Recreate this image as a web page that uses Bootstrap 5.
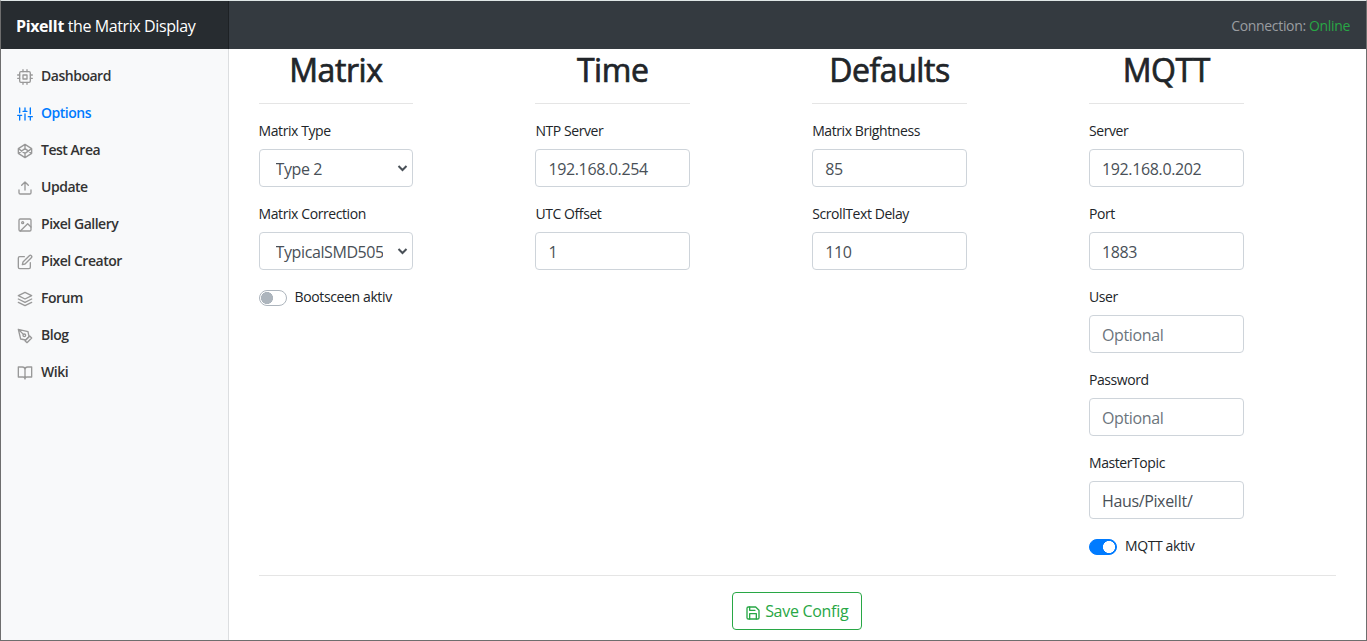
<!DOCTYPE html>
<html lang="en">
<head>
<meta charset="utf-8">
<meta name="viewport" content="width=device-width, initial-scale=1">
<title>PixelIt the Matrix Display</title>
<link href="https://cdn.jsdelivr.net/npm/bootstrap@5.3.0/dist/css/bootstrap.min.css" rel="stylesheet">
<style>
  body { font-family: "Open Sans", "Noto Sans", sans-serif; color: #212529; background: #fff; height: 100vh; overflow: hidden; }
  .app-frame { height: 100vh; border: 1px solid #6e6e6e; border-top-color: #dfe6e6; }
  .app-header { height: 48px; background: #343a40; }
  .app-brand { width: 228px; padding-left: 15px; padding-top: 1px; background: #272c30; box-shadow: inset -1px 0 0 rgba(0,0,0,.25); color: #fff; font-size: 16px; letter-spacing: -.4px; }
  .app-status { font-size: 14px; letter-spacing: -.34px; color: #9a9da0; padding-right: 16px; padding-top: 1px; }
  .app-status span { color: #28a745; }
  .app-side { width: 228px; background: #f8f9fa; border-right: 1px solid #dcdee0; padding-top: 8.5px; }
  .app-side .nav-link { height: 37px; padding: 0 16px; color: #333; font-size: 14px; font-weight: 600; letter-spacing: -.48px; gap: 8px; }
  .app-side .nav-link span { margin-top: -2px; }
  .app-side .nav-link svg { width: 16px; height: 16px; color: #999; margin-top: 2px; }
  .app-side .nav-link.active, .app-side .nav-link.active svg { color: #007bff; }
  .icon { fill: none; stroke: currentColor; stroke-width: 2; stroke-linecap: round; stroke-linejoin: round; flex: none; }
  .app-main { padding: 0 30.2px 0 29.6px; }
  .app-main .row { --bs-gutter-x: 30px; }
  h2 { font-size: 32px; font-weight: 400; -webkit-text-stroke: .7px #212529; line-height: 38.4px; margin: 0; padding-top: 2px; height: 38px; letter-spacing: -.45px; }
  hr { margin: 16px 0; border-top: 1px solid rgba(0,0,0,.1); opacity: 1; }
  .form-label { display: block; font-size: 14px; line-height: 21px; margin-bottom: 8px; padding: 0; letter-spacing: -.42px; }
  .field { margin-bottom: 16px; }
  .form-control, .form-select { height: 38px; font-size: 16px; padding: 8px 12px 6px; color: #495057; border-color: #ced4da; border-radius: 4px; letter-spacing: -.4px; }
  .form-control { letter-spacing: -.36px; }
  .form-control::placeholder { color: #6c757d; }
  .form-select { padding: 7px 29px 6px 16px; text-overflow: clip; background-size: 11px 12px; background-position: right 4px center;
    background-image: url("data:image/svg+xml,%3csvg xmlns='http://www.w3.org/2000/svg' viewBox='0 0 11 12'%3e%3cpath fill='none' stroke='%23495057' stroke-width='2' d='M1.5 4l4 4 4-4'/%3e%3c/svg%3e"); }
  .form-switch { min-height: 24px; height: 24px; padding-left: 36px; margin-bottom: 16px; }
  .form-switch .form-check-input { width: 28px; height: 16px; margin: 4px 0 0 -36px; border-color: #adb5bd; background-size: auto; background-position: 1px center; background-repeat: no-repeat;
    background-image: radial-gradient(circle at 6px 7px, #adb5bd 5.7px, transparent 6.3px); }
  .form-switch .form-check-input:checked { background-color: #007bff; border-color: #007bff; background-position: 13px center; background-image: radial-gradient(circle at 6px 7px, #fff 5.7px, transparent 6.3px); }
  .form-switch .form-check-label { display: block; font-size: 14px; line-height: 21px; letter-spacing: -.38px; }
  .btn-save { --bs-btn-color: #28a745; --bs-btn-border-color: #28a745; width: 130px; height: 38px; border-radius: 4px; padding: 0 1px 0 0; letter-spacing: -.3px; }
  .btn-save .icon { margin-top: 3px; }
</style>
</head>
<body>
<div class="app-frame d-flex flex-column">
  <header class="app-header d-flex justify-content-between flex-shrink-0">
    <div class="app-brand d-flex align-items-center"><div><strong>PixelIt</strong> the Matrix Display</div></div>
    <div class="app-status d-flex align-items-center"><div>Connection: <span>Online</span></div></div>
  </header>
  <div class="d-flex flex-grow-1">
    <nav class="app-side flex-shrink-0">
      <ul class="nav flex-column">
        <li><a class="nav-link d-flex align-items-center" href="#"><svg class="icon" viewBox="0 0 24 24"><rect x="4" y="4" width="16" height="16" rx="2"/><rect x="9" y="9" width="6" height="6"/><path d="M9 1v3M15 1v3M9 20v3M15 20v3M20 9h3M20 14h3M1 9h3M1 14h3"/></svg><span>Dashboard</span></a></li>
        <li><a class="nav-link active d-flex align-items-center" href="#"><svg class="icon" viewBox="0 0 24 24"><path d="M4 21v-7M4 10V3M12 21v-9M12 8V3M20 21v-5M20 12V3M1 14h6M9 8h6M17 16h6"/></svg><span>Options</span></a></li>
        <li><a class="nav-link d-flex align-items-center" href="#"><svg class="icon" viewBox="0 0 24 24"><path d="M12 2l10 6.500v7L12 22 2 15.500v-7L12 2zM12 22v-6.500M22 8.500l-10 7-10-7M2 15.500l10-7 10 7M12 2v6.500"/></svg><span>Test Area</span></a></li>
        <li><a class="nav-link d-flex align-items-center" href="#"><svg class="icon" viewBox="0 0 24 24"><path d="M21 15v4a2 2 0 0 1-2 2H5a2 2 0 0 1-2-2v-4M17 8l-5-5-5 5M12 3v12"/></svg><span>Update</span></a></li>
        <li><a class="nav-link d-flex align-items-center" href="#"><svg class="icon" viewBox="0 0 24 24"><rect x="3" y="3" width="18" height="18" rx="2"/><circle cx="8.500" cy="8.500" r="1.500"/><path d="M21 15l-5-5L5 21"/></svg><span>Pixel Gallery</span></a></li>
        <li><a class="nav-link d-flex align-items-center" href="#"><svg class="icon" viewBox="0 0 24 24"><path d="M11 4H4a2 2 0 0 0-2 2v14a2 2 0 0 0 2 2h14a2 2 0 0 0 2-2v-7"/><path d="M18.500 2.500a2.121 2.121 0 0 1 3 3L12 15l-4 1 1-4 9.500-9.500z"/></svg><span>Pixel Creator</span></a></li>
        <li><a class="nav-link d-flex align-items-center" href="#"><svg class="icon" viewBox="0 0 24 24"><path d="M12 2L2 7l10 5 10-5-10-5zM2 17l10 5 10-5M2 12l10 5 10-5"/></svg><span>Forum</span></a></li>
        <li><a class="nav-link d-flex align-items-center" href="#"><svg class="icon" viewBox="0 0 24 24"><path d="M12 19l7-7 3 3-7 7-3-3z"/><path d="M18 13l-1.500-7.500L2 2l3.500 14.500L13 18l5-5zM2 2l7.586 7.586"/><circle cx="11" cy="11" r="2"/></svg><span>Blog</span></a></li>
        <li><a class="nav-link d-flex align-items-center" href="#"><svg class="icon" viewBox="0 0 24 24"><path d="M2 3h6a4 4 0 0 1 4 4v14a3 3 0 0 0-3-3H2zM22 3h-6a4 4 0 0 0-4 4v14a3 3 0 0 1 3-3h7z"/></svg><span>Wiki</span></a></li>
      </ul>
    </nav>
    <main class="app-main flex-grow-1">
      <div class="row">
        <div class="col-3"><div class="row"><div class="col-8">
          <h2 class="text-center">Matrix</h2><hr>
          <div class="field"><label class="form-label" for="mtype">Matrix Type</label><select class="form-select" id="mtype"><option>Type 2</option></select></div>
          <div class="field"><label class="form-label" for="mcorr">Matrix Correction</label><select class="form-select" id="mcorr"><option>TypicalSMD505</option></select></div>
          <div class="form-check form-switch"><input class="form-check-input" type="checkbox" id="boot"><label class="form-check-label" for="boot">Bootsceen aktiv</label></div>
        </div></div></div>
        <div class="col-3"><div class="row"><div class="col-8">
          <h2 class="text-center">Time</h2><hr>
          <div class="field"><label class="form-label" for="ntp">NTP Server</label><input class="form-control" id="ntp" value="192.168.0.254"></div>
          <div class="field"><label class="form-label" for="utc">UTC Offset</label><input class="form-control" id="utc" value="1"></div>
        </div></div></div>
        <div class="col-3"><div class="row"><div class="col-8">
          <h2 class="text-center">Defaults</h2><hr>
          <div class="field"><label class="form-label" for="bri">Matrix Brightness</label><input class="form-control" id="bri" value="85"></div>
          <div class="field"><label class="form-label" for="scr">ScrollText Delay</label><input class="form-control" id="scr" value="110"></div>
        </div></div></div>
        <div class="col-3"><div class="row"><div class="col-8">
          <h2 class="text-center">MQTT</h2><hr>
          <div class="field"><label class="form-label" for="srv">Server</label><input class="form-control" id="srv" value="192.168.0.202"></div>
          <div class="field"><label class="form-label" for="port">Port</label><input class="form-control" id="port" value="1883"></div>
          <div class="field"><label class="form-label" for="user">User</label><input class="form-control" id="user" placeholder="Optional"></div>
          <div class="field"><label class="form-label" for="pass">Password</label><input class="form-control" id="pass" type="password" placeholder="Optional"></div>
          <div class="field"><label class="form-label" for="topic">MasterTopic</label><input class="form-control" id="topic" value="Haus/PixelIt/"></div>
          <div class="form-check form-switch"><input class="form-check-input" type="checkbox" id="mqtt" checked><label class="form-check-label" for="mqtt">MQTT aktiv</label></div>
        </div></div></div>
      </div>
      <hr class="mt-0">
      <div class="text-center">
        <button class="btn btn-outline-success btn-save d-inline-flex align-items-center justify-content-center gap-1" type="button"><svg class="icon" width="16" height="16" viewBox="0 0 24 24"><path d="M19 21H5a2 2 0 0 1-2-2V5a2 2 0 0 1 2-2h11l5 5v11a2 2 0 0 1-2 2z"/><path d="M17 21v-8H7v8M7 3v5h8"/></svg><span>Save Config</span></button>
      </div>
    </main>
  </div>
</div>
<script src="https://cdn.jsdelivr.net/npm/bootstrap@5.3.0/dist/js/bootstrap.bundle.min.js"></script>
</body>
</html>
